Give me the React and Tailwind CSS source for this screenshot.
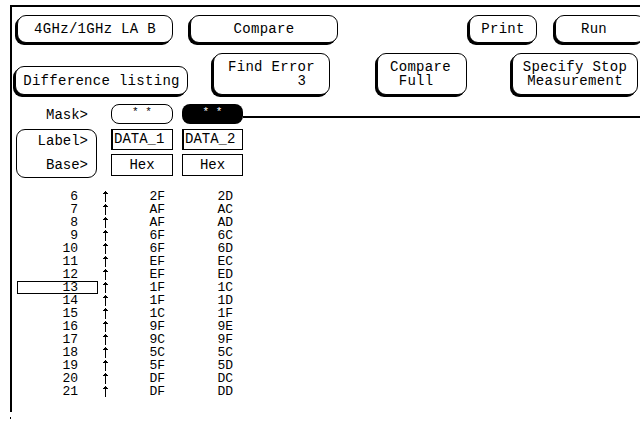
import React from "react";

const rows = [
  [6, "2F", "2D"],
  [7, "AF", "AC"],
  [8, "AF", "AD"],
  [9, "6F", "6C"],
  [10, "6F", "6D"],
  [11, "EF", "EC"],
  [12, "EF", "ED"],
  [13, "1F", "1C"],
  [14, "1F", "1D"],
  [15, "1C", "1F"],
  [16, "9F", "9E"],
  [17, "9C", "9F"],
  [18, "5C", "5C"],
  [19, "5F", "5D"],
  [20, "DF", "DC"],
  [21, "DF", "DD"],
];

// raised key with the heavy left/bottom edge
const Key = ({ className, children }) => (
  <div
    className={`flex shrink-0 flex-col items-center justify-center rounded-[9px] border border-black bg-white leading-[14px] tracking-[0.3px] shadow-[-2px_2px_0_0_#000] ${className}`}
  >
    {children}
  </div>
);

// small up-arrow marker used in the listing
const Tick = () => (
  <svg width="7" height="11" viewBox="0 0 7 11" shapeRendering="crispEdges" className="mx-auto">
    <rect x="3" y="0" width="1" height="11" fill="#000" />
    <rect x="1" y="2" width="5" height="1" fill="#000" />
    <rect x="2" y="1" width="3" height="1" fill="#000" />
  </svg>
);

const App = () => {
  return (
    <div className="h-[421px] w-[640px] overflow-hidden bg-white pl-[10px] pt-[5px] font-['Liberation_Mono',monospace] text-[14px] text-black">
      <div className="h-[407px] border-l-2 border-t-2 border-black">
        {/* Top row */}
        <div className="mt-[8px] flex h-[28px]">
          <Key className="ml-[5px] w-[156px]">4GHz/1GHz LA B</Key>
          <Key className="ml-[17px] w-[148px]">Compare</Key>
          <Key className="ml-[131px] w-[68px]">Print</Key>
          <Key className="ml-[18px] w-[90px] pr-[12px]">Run</Key>
        </div>

        {/* Second row */}
        <div className="mt-[10px] flex h-[42px] items-end">
          <Key className="ml-[3px] h-[29px] w-[173px]">Difference listing</Key>
          <Key className="ml-[25px] h-[42px] w-[117px] !items-start pl-[14px]">
            <span>Find Error</span>
            <span className="whitespace-pre">{"        3"}</span>
          </Key>
          <Key className="ml-[47px] h-[42px] w-[90px] !items-start pl-[12px]">
            <span>Compare</span>
            <span className="whitespace-pre">{" Full"}</span>
          </Key>
          <Key className="ml-[45px] h-[42px] w-[126px]">
            <span>Specify Stop</span>
            <span>Measurement</span>
          </Key>
        </div>

        {/* Mask row */}
        <div className="mt-[9px] flex h-[20px] items-center">
          <div className="ml-[4px] w-[81px] pr-[9px] pt-[3px] text-right">Mask&gt;</div>
          <div className="ml-[14px] flex h-[20px] w-[62px] justify-center rounded-[8px] border border-black pt-[1px] text-[11px] leading-[12px]">
            * *
          </div>
          <div className="ml-[9px] flex h-[20px] w-[61px] justify-center rounded-[8px] bg-black pt-[2px] text-[11px] leading-[12px] text-white">
            * *
          </div>
          <div className="mt-[5px] h-[2px] flex-1 bg-black" />
        </div>

        {/* Label / Base */}
        <div className="mt-[5px] flex">
          <div className="ml-[4px] flex h-[49px] w-[81px] flex-col rounded-[9px] border border-black pr-[8px] text-right">
            <div className="flex h-[24px] items-center justify-end">Label&gt;</div>
            <div className="flex h-[24px] items-center justify-end">Base&gt;</div>
          </div>
          <div className="ml-[14px] flex w-[62px] flex-col gap-[4px]">
            <div className="flex h-[21px] items-center border border-l-2 border-black pl-[1px]">DATA_1</div>
            <div className="flex h-[22px] items-center justify-center border border-black">Hex</div>
          </div>
          <div className="ml-[9px] flex w-[61px] flex-col gap-[4px]">
            <div className="flex h-[21px] items-center border border-l-2 border-black pl-[1px]">DATA_2</div>
            <div className="flex h-[22px] items-center justify-center border border-black">Hex</div>
          </div>
        </div>

        {/* Listing */}
        <div className="mt-[12px] flex flex-col text-[13px] leading-[13px]">
          {rows.map(([n, a, b]) => (
            <div key={n} className="flex h-[13px] items-center">
              <div
                className={`ml-[5px] h-[13px] w-[81px] pr-[20px] text-right ${
                  n === 13 ? "shadow-[inset_0_0_0_1px_#000]" : ""
                }`}
              >
                {n}
              </div>
              <div className="flex w-[14px] justify-center">
                <Tick />
              </div>
              <div className="w-[53px] text-right">{a}</div>
              <div className="w-[68px] text-right">{b}</div>
            </div>
          ))}
        </div>
      </div>
      <div className="mt-[5px] h-[2px] w-[1px] bg-black" />
    </div>
  );
};

export default App;
